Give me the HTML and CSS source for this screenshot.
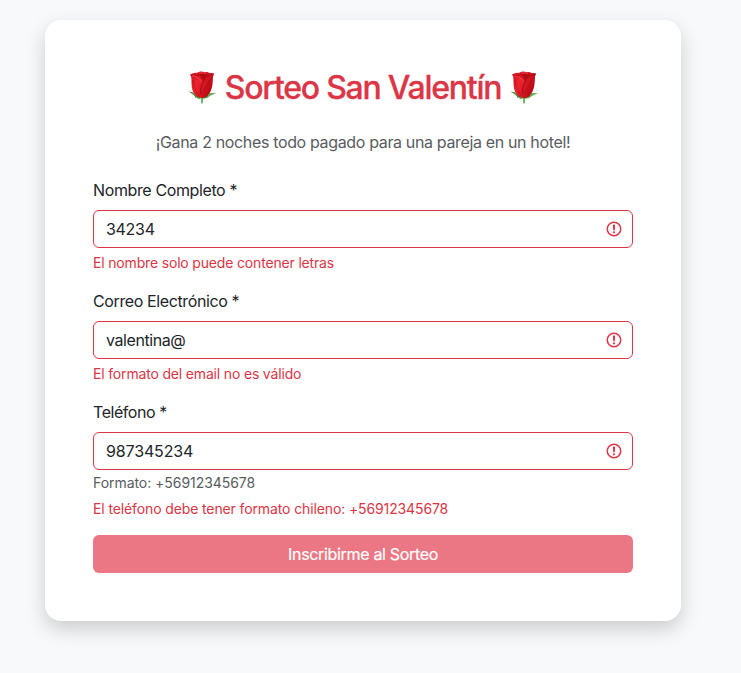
FILE: index.html
```html
<!DOCTYPE html>
<html lang="es">
<head>
<meta charset="utf-8">
<title>Sorteo San Valentín</title>
<link rel="stylesheet" href="styles.css">
</head>
<body>
<svg class="defs" width="0" height="0" aria-hidden="true">
  <defs>
    <linearGradient id="petal" x1="0" x2="1" y1="0" y2="0.4">
      <stop offset="0" stop-color="#c90d18"/><stop offset=".4" stop-color="#ed2430"/><stop offset="1" stop-color="#b60712"/>
    </linearGradient>
    <symbol id="rose" viewBox="0 0 30 33">
      <path d="M14 25h2.200l-.5 7.500h-1.400z" fill="#5cab45"/>
      <path d="M1 20.500c3 .2 5 .6 7 2l6 4.300-1 1.200C8.500 27.500 7 23 1 20.500z" fill="#4f9a40"/>
      <path d="M29 22.500c-4-.8-7-.4-9 1l-5 4c5 1.500 7-3.500 14-5z" fill="#6aad55"/>
      <path d="M9 21c-1.500 3-1.500 4-.5 6 1-1.500 3-1.500 6-.5 3 .5 5-.5 6 0 .5-2 .5-3.500-.5-5.500z" fill="#3f8a34"/>
      <path d="M3 3.500C6 2.500 7.500 1.500 10 2c2-1.800 5-2 8-.7 2-.6 4 .2 5 1 1.800-.8 3.200-.3 4.300.5-1.500 2-1.300 3.500-1.500 6-.1 7-1.800 13-5.500 16.200-2.500 2.400-7.500 2.500-10.500.3C5.500 22 4.500 17 4.500 11c0-3 .2-5-1.500-7.500z" fill="url(#petal)"/>
      <path d="M10 3c3-1.800 8-1.600 11 .4-2 2-3.500 3-4.500 5.600C15 6 12.500 4.200 10 3z" fill="#b50812"/>
      <path d="M7 4c4 0 8 3 9.500 6.500C18 6.500 20.500 4 25 3.500M14 23c-1-4 0-9 2.500-12.500" fill="none" stroke="#9b0712" stroke-width=".8"/>
      <path d="M22 9c-1.500 5-3.500 9-7 14M6 9c1 6 2 11 6 15" fill="none" stroke="#a50813" stroke-width=".5"/>
      <path d="M5 5c4 0 7.500 2 9.500 5.500M12 2.500c2.500-.7 5-.5 7 .5" fill="none" stroke="#f65860" stroke-width=".6"/>
    </symbol>
    <symbol id="alert" viewBox="0 0 12 12">
      <circle cx="6" cy="6" r="4.500" fill="none" stroke="#dc3545"/>
      <path d="M5.800 3.600h.4L6 6.500z" fill="#dc3545" stroke="#dc3545" stroke-width="1.100" stroke-linejoin="round"/>
      <circle cx="6" cy="8.200" r=".6" fill="#dc3545" stroke="#dc3545" stroke-width=".3"/>
    </symbol>
  </defs>
</svg>
<main class="card">
  <h1 class="title"><svg class="rose"><use href="#rose"/></svg><span class="title-text">Sorteo San Valentín</span><svg class="rose"><use href="#rose"/></svg></h1>
  <p class="lead">¡Gana 2 noches todo pagado para una pareja en un hotel!</p>
  <form>
    <div class="field">
      <label class="label" for="name">Nombre Completo *</label>
      <div class="control"><input class="input" id="name" value="34234"><svg class="alert"><use href="#alert"/></svg></div>
      <div class="error">El nombre solo puede contener letras</div>
    </div>
    <div class="field">
      <label class="label" for="email">Correo Electrónico *</label>
      <div class="control"><input class="input input-email" id="email" value="valentina@"><svg class="alert"><use href="#alert"/></svg></div>
      <div class="error">El formato del email no es válido</div>
    </div>
    <div class="field">
      <label class="label label-phone" for="phone">Teléfono *</label>
      <div class="control"><input class="input input-phone" id="phone" value="987345234"><svg class="alert"><use href="#alert"/></svg></div>
      <div class="hint">Formato: +56912345678</div>
      <div class="error">El teléfono debe tener formato chileno: +56912345678</div>
    </div>
    <button class="submit" type="button" disabled>Inscribirme al Sorteo</button>
  </form>
</main>
</body>
</html>
```
FILE: styles.css
```css
* { box-sizing: border-box; }
body {
  margin: 0;
  padding: 20px 60px 52px 45px;
  background: #f7f9fb;
  color: #212529;
  font: 400 16px/24px Inter, "Liberation Sans", sans-serif;
  overflow: hidden;
}
.defs { position: absolute; }
.card {
  height: 601px;
  padding: 48px;
  border-radius: 16px;
  background: #fff;
  box-shadow: 0 8px 20px rgba(0, 0, 0, .18);
}
.title {
  display: flex;
  justify-content: center;
  align-items: center;
  gap: 8px;
  height: 38px;
  margin: 0 0 24px;
  color: #dc3545;
  font-size: 32px;
  line-height: 38px;
  font-weight: 500;
  letter-spacing: -1.25px;
  white-space: nowrap;
}
.title-text { padding-top: 1px; -webkit-text-stroke: .3px #dc3545; }
.rose { width: 30px; height: 33px; flex: none; }
.lead {
  margin: 0 0 24px;
  color: #595c5f;
  text-align: center;
  letter-spacing: -.35px;
  white-space: nowrap;
}
.field { margin-bottom: 16px; }
.label { display: block; margin-bottom: 8px; letter-spacing: -.38px; }
.label-phone { letter-spacing: -.45px; }
.control { position: relative; height: 38px; }
.input {
  display: block;
  width: 100%;
  height: 38px;
  padding: 6px 36px 6px 12px;
  border: 1px solid #dc3545;
  border-radius: 6px;
  background: #fff;
  color: #212529;
  font: inherit;
  letter-spacing: -.3px;
}
.input-email { letter-spacing: -.42px; }
.input-phone { letter-spacing: -.15px; }
.alert { position: absolute; top: 10px; right: 10px; width: 18px; height: 18px; }
.error, .hint {
  margin-top: 4px;
  font-size: 14px;
  line-height: 21px;
  letter-spacing: -.17px;
}
.error { color: #dc3545; }
.hint { margin-top: 2px; color: #595c5f; letter-spacing: -.05px; }
.hint + .error { margin-top: 5px; letter-spacing: -.12px; }
.submit {
  display: block;
  width: 100%;
  height: 38px;
  border: 0;
  border-radius: 6px;
  background: #ea7783;
  color: #fff;
  font: inherit;
  letter-spacing: -.33px;
  -webkit-text-stroke: .2px #fff;
}
```
